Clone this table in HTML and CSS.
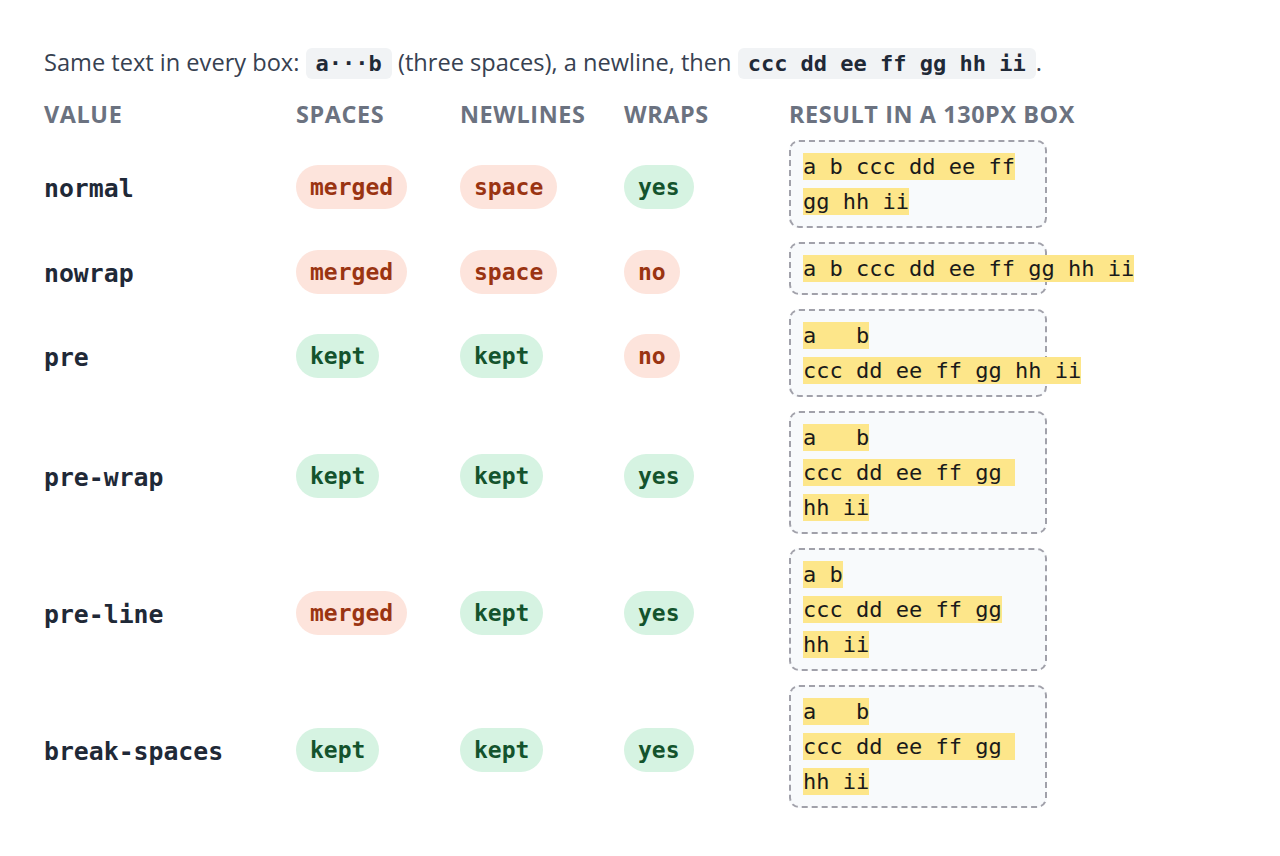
FILE: index.html
```html
<!DOCTYPE html>
<html lang="en">
<head>
<meta charset="utf-8">
<title>white-space values</title>
<link rel="stylesheet" href="styles.css">
</head>
<body>
<main class="page">
  <p class="intro">Same text in every box: <code class="code">a···b</code> (three spaces), a newline, then <code class="code">ccc dd ee ff gg hh ii</code>.</p>
  <div class="grid">
    <div class="th">Value</div>
    <div class="th">Spaces</div>
    <div class="th">Newlines</div>
    <div class="th">Wraps</div>
    <div class="th">Result in a 130px box</div>

    <div class="val">normal</div>
    <div><span class="badge bad">merged</span></div>
    <div><span class="badge bad">space</span></div>
    <div><span class="badge good">yes</span></div>
    <div class="cell"><div class="box ws-normal"><span class="hl">a   b
ccc dd ee ff gg hh ii</span></div></div>

    <div class="val">nowrap</div>
    <div><span class="badge bad">merged</span></div>
    <div><span class="badge bad">space</span></div>
    <div><span class="badge bad">no</span></div>
    <div class="cell"><div class="box ws-nowrap"><span class="hl">a   b
ccc dd ee ff gg hh ii</span></div></div>

    <div class="val">pre</div>
    <div><span class="badge good">kept</span></div>
    <div><span class="badge good">kept</span></div>
    <div><span class="badge bad">no</span></div>
    <div class="cell"><div class="box ws-pre"><span class="hl">a   b
ccc dd ee ff gg hh ii</span></div></div>

    <div class="val">pre-wrap</div>
    <div><span class="badge good">kept</span></div>
    <div><span class="badge good">kept</span></div>
    <div><span class="badge good">yes</span></div>
    <div class="cell"><div class="box ws-pre-wrap"><span class="hl">a   b
ccc dd ee ff gg hh ii</span></div></div>

    <div class="val">pre-line</div>
    <div><span class="badge bad">merged</span></div>
    <div><span class="badge good">kept</span></div>
    <div><span class="badge good">yes</span></div>
    <div class="cell"><div class="box ws-pre-line"><span class="hl">a   b
ccc dd ee ff gg hh ii</span></div></div>

    <div class="val">break-spaces</div>
    <div><span class="badge good">kept</span></div>
    <div><span class="badge good">kept</span></div>
    <div><span class="badge good">yes</span></div>
    <div class="cell"><div class="box ws-break-spaces"><span class="hl">a   b
ccc dd ee ff gg hh ii</span></div></div>
  </div>
</main>
</body>
</html>
```
FILE: styles.css
```css
html, body {
  margin: 0;
  background: #ffffff;
}
.page {
  padding: 40px 44px;
  font-family: "Open Sans", "Noto Sans", sans-serif;
  color: #374151;
}
.intro {
  margin: 0;
  font-size: 23.6px;
  line-height: 44px;
}
.code {
  font-family: "DejaVu Sans Mono", monospace;
  font-weight: bold;
  font-size: 22px;
  background: #f1f3f5;
  color: #1f2937;
  border-radius: 6px;
  padding: 3px 10px;
}
.grid {
  display: grid;
  grid-template-columns: 252px 164px 164px 165px auto;
  row-gap: 8px;
  align-items: center;
  margin-top: 16px;
}
.th {
  font-weight: 700;
  font-size: 23.4px;
  letter-spacing: 0.6px;
  text-transform: uppercase;
  color: #6b7280;
  line-height: 24px;
  margin-bottom: 6px;
}
.val {
  font-family: "DejaVu Sans Mono", monospace;
  font-weight: bold;
  font-size: 24.8px;
  color: #1f2937;
  padding-top: 3px;
}
.badge {
  display: inline-flex;
  align-items: center;
  height: 44px;
  padding: 0 14px;
  border-radius: 22px;
  font-family: "DejaVu Sans Mono", monospace;
  font-weight: bold;
  font-size: 23px;
}
.bad {
  background: #fde4dc;
  color: #9a3412;
}
.good {
  background: #d6f3e2;
  color: #14532d;
}
.cell {
  padding-bottom: 6px;
}
.box {
  box-sizing: border-box;
  width: 258px;
  padding: 7px 12px;
  border: 2px dashed #a1a1aa;
  border-radius: 10px;
  background: #f8fafc;
  font-family: "DejaVu Sans Mono", monospace;
  font-size: 22px;
  line-height: 35px;
  color: #1a1a1a;
}
.hl {
  background: #fde68a;
  padding: 1px 0;
}
.ws-normal { white-space: normal; }
.ws-nowrap { white-space: nowrap; }
.ws-pre { white-space: pre; }
.ws-pre-wrap { white-space: pre-wrap; }
.ws-pre-line { white-space: pre-line; }
.ws-break-spaces { white-space: break-spaces; }
```
